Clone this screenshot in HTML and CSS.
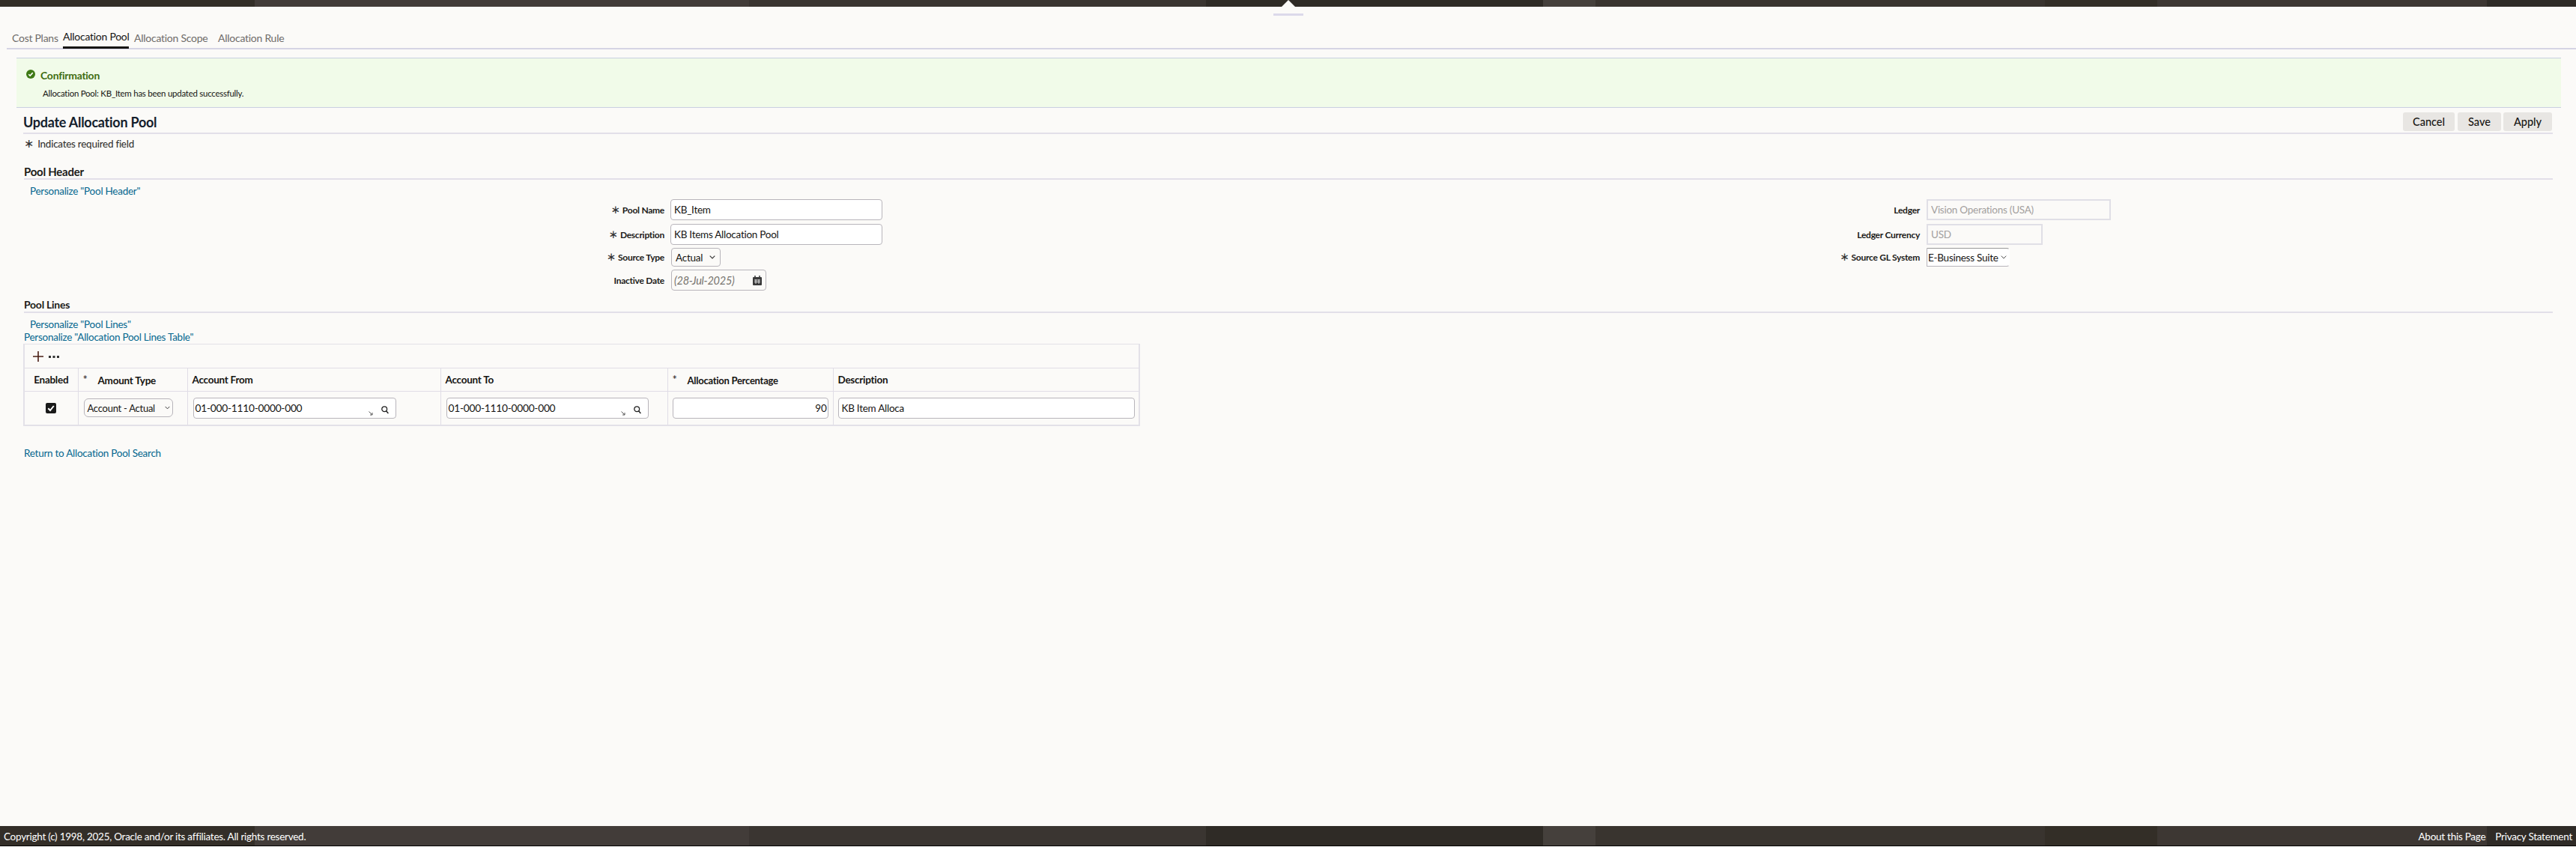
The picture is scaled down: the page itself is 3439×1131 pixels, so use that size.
FILE: index.html
```html
<!DOCTYPE html>
<html lang="en">
<head>
<meta charset="utf-8">
<title>Update Allocation Pool</title>
<link rel="stylesheet" href="styles.css">
</head>
<body>
<header class="topbar">
  <span class="notch"></span>
</header>
<div class="grip-row"><span class="grip"></span></div>
<nav class="tabs">
  <a class="tab tab-cost">Cost Plans</a>
  <a class="tab tab-active">Allocation Pool</a>
  <a class="tab tab-scope">Allocation Scope</a>
  <a class="tab tab-rule">Allocation Rule</a>
</nav>
<main class="main">
  <section class="confirm">
    <div class="confirm-head">
      <svg class="confirm-icon" width="12" height="12" viewBox="0 0 14 14"><circle cx="7" cy="7" r="7" fill="#3f7a16"/><path d="M3.800 7.200 6 9.400l4.200-4.600" fill="none" stroke="#fff" stroke-width="1.800"/></svg>
      <span class="confirm-title">Confirmation</span>
    </div>
    <p class="confirm-msg">Allocation Pool: KB_Item has been updated successfully.</p>
  </section>

  <div class="page-head">
    <h1 class="page-title">Update Allocation Pool</h1>
    <div class="actions">
      <button class="btn btn-cancel">Cancel</button>
      <button class="btn btn-save">Save</button>
      <button class="btn btn-apply">Apply</button>
    </div>
  </div>
  <p class="required-note"><span class="star star-note">∗</span>Indicates required field</p>

  <h2 class="section-title section-pool">Pool Header</h2>
  <a class="link link-indent link-pool">Personalize "Pool Header"</a>

  <div class="form">
    <div class="form-col col-left">
      <div class="form-row row-first"><label class="label"><span class="star">∗</span>Pool Name</label><input class="input w-283" value="KB_Item"></div>
      <div class="form-row"><label class="label"><span class="star">∗</span>Description</label><input class="input w-283" value="KB Items Allocation Pool"></div>
      <div class="form-row"><label class="label"><span class="star">∗</span>Source Type</label>
        <div class="select w-66"><span>Actual</span><svg class="chev" width="8" height="5" viewBox="0 0 8 5"><path d="M.7.7 4 4 7.300.7" fill="none" stroke="#333" stroke-width="1.100"/></svg></div></div>
      <div class="form-row"><label class="label">Inactive Date</label>
        <div class="date w-127"><span class="date-text">(28-Jul-2025)</span>
          <svg width="12" height="13" viewBox="0 0 12 13"><path d="M1 2h10a1 1 0 0 1 1 1v9a1 1 0 0 1-1 1H1a1 1 0 0 1-1-1V3a1 1 0 0 1 1-1z" fill="#3a3a3a"/><path d="M3 0v3M9 0v3" stroke="#3a3a3a" stroke-width="1.500"/><path d="M2 6h8M2 8.500h8M4 5v6M8 5v6" stroke="#fff" stroke-width=".8"/></svg></div></div>
    </div>
    <div class="form-col col-right">
      <div class="form-row row-first"><label class="label">Ledger</label><input class="input input-off w-246" value="Vision Operations (USA)" disabled></div>
      <div class="form-row"><label class="label">Ledger Currency</label><input class="input input-off w-155" value="USD" disabled></div>
      <div class="form-row"><label class="label"><span class="star">∗</span>Source GL System</label>
        <div class="select select-square w-111"><span>E-Business Suite</span><svg class="chev" width="8" height="5" viewBox="0 0 8 5"><path d="M.7.7 4 4 7.300.7" fill="none" stroke="#555" stroke-width="1"/></svg></div></div>
    </div>
  </div>

  <h2 class="section-title section-lines">Pool Lines</h2>
  <a class="link link-indent link-lines">Personalize "Pool Lines"</a>
  <a class="link link-table">Personalize "Allocation Pool Lines Table"</a>

  <div class="table-wrap">
    <div class="toolbar">
      <svg width="14" height="14" viewBox="0 0 14 14"><path d="M7 0v14M0 7h14" stroke="#4a1f14" stroke-width="1.600"/></svg>
      <svg class="dots" width="14" height="3" viewBox="0 0 14 3"><path d="M0 0h3v3H0zM5.500 0h3v3h-3zM11 0h3v3h-3z" fill="#333"/></svg>
    </div>
    <table class="lines">
      <colgroup><col class="c1"><col class="c2"><col class="c3"><col class="c4"><col class="c5"><col class="c6"></colgroup>
      <thead><tr>
        <th class="center">Enabled</th>
        <th><span class="th-star">*</span>Amount Type</th>
        <th>Account From</th>
        <th>Account To</th>
        <th class="th-narrow"><span class="th-star">*</span>Allocation Percentage</th>
        <th>Description</th>
      </tr></thead>
      <tbody><tr>
        <td class="center"><svg class="check" width="14" height="14" viewBox="0 0 14 14"><rect width="14" height="14" rx="2" fill="#1a1a1a"/><path d="M3.300 7.300 6 10l4.800-6" fill="none" stroke="#fff" stroke-width="2"/></svg></td>
        <td><div class="select cell-select"><span>Account - Actual</span><svg class="chev" width="7" height="5" viewBox="0 0 8 5"><path d="M.7.7 4 4 7.300.7" fill="none" stroke="#333" stroke-width="1.100"/></svg></div></td>
        <td><div class="lov w-271"><span class="lov-text">01-000-1110-0000-000</span>
          <svg class="lov-arrow" width="6" height="6" viewBox="0 0 6 6"><path d="M.5.500 5 5M5 2v3H2" fill="none" stroke="#555" stroke-width="1"/></svg>
          <svg class="lov-search" width="10" height="11" viewBox="0 0 10 11"><circle cx="4.200" cy="4.200" r="3.400" fill="none" stroke="#222" stroke-width="1.300"/><path d="M6.600 6.800 9.400 10" stroke="#222" stroke-width="1.400"/></svg></div></td>
        <td><div class="lov w-270"><span class="lov-text">01-000-1110-0000-000</span>
          <svg class="lov-arrow" width="6" height="6" viewBox="0 0 6 6"><path d="M.5.500 5 5M5 2v3H2" fill="none" stroke="#555" stroke-width="1"/></svg>
          <svg class="lov-search" width="10" height="11" viewBox="0 0 10 11"><circle cx="4.200" cy="4.200" r="3.400" fill="none" stroke="#222" stroke-width="1.300"/><path d="M6.600 6.800 9.400 10" stroke="#222" stroke-width="1.400"/></svg></div></td>
        <td><input class="input input-num w-208" value="90"></td>
        <td><input class="input w-396" value="KB Item Alloca"></td>
      </tr></tbody>
    </table>
  </div>

  <a class="link link-return">Return to Allocation Pool Search</a>
</main>
<footer class="footer">
  <span>Copyright (c) 1998, 2025, Oracle and/or its affiliates. All rights reserved.</span>
  <span class="footer-links"><a>About this Page</a><a>Privacy Statement</a></span>
</footer>
</body>
</html>
```
FILE: styles.css
```css
* { box-sizing: border-box; }
html, body { height: 100%; }
body {
  margin: 0;
  height: 1131px;
  overflow: hidden;
  display: flex;
  flex-direction: column;
  background: #fbfaf8;
  color: #161513;
  font-family: Lato, "Liberation Sans", sans-serif;
  font-size: 13px;
  letter-spacing: -0.02em;
}
.topbar, .footer {
  background-color: #39342f;
  background-image: linear-gradient(90deg,
    #332e28 0, #332e28 340px, #423c39 340px, #423c39 1000px,
    #3a3531 1000px, #3a3531 1610px, #2f2b26 1610px, #2f2b26 2060px,
    #45403c 2060px, #45403c 2130px, #39342f 2130px, #39342f 2730px,
    #332e27 2730px, #332e27 2880px, #3d3733 2880px, #3d3733 3320px, #2f2b27 3320px);
}
.topbar { height: 9px; position: relative; flex: none; }
.notch {
  position: absolute;
  left: 1711px;
  top: 0;
  width: 0; height: 0;
  border-left: 9px solid transparent;
  border-right: 9px solid transparent;
  border-bottom: 9px solid #fbfaf8;
}
.grip-row { height: 12px; flex: none; padding: 9px 0 0 1700px; }
.grip { display: block; width: 40px; height: 3px; background: #dcd9ea; }

.tabs {
  flex: none;
  height: 45px;
  margin-left: 9px;
  border-bottom: 2px solid #d5d4e4;
  display: flex;
  align-items: flex-end;
  padding-left: 7px;
  font-size: 14px;
  color: #6f6c6a;
}
.tab { display: block; height: 30px; line-height: 34px; white-space: nowrap; }
.tab-cost { width: 68px; }
.tab-active {
  width: 88px; color: #161513; margin-right: 7px;
  border-bottom: 3px solid #161513; margin-bottom: -1px; line-height: 28px;
}
.tab-scope { width: 112px; }

.main { flex: 1; min-height: 0; padding: 11px 31px 0 22px; }
.confirm {
  height: 67px;
  margin-right: -11px;
  background: #f1fbe9;
  border-top: 1px solid #c9cfe0;
  border-bottom: 1px solid #c9cfe0;
  padding: 14px 0 0 13px;
}
.confirm-head { display: flex; align-items: center; gap: 7px; height: 16px; }
.confirm-icon { flex: none; margin-top: -2px; }
.confirm-title { color: #3f6d12; font-weight: 700; font-size: 14px; }
.confirm-msg { margin: 8px 0 0 22px; font-size: 11.500px; line-height: 18px; }

.page-head {
  margin-left: 9px;
  height: 35px;
  border-bottom: 2px solid #e2dfe9;
  display: flex;
  justify-content: space-between;
  align-items: flex-start;
  padding-top: 6px;
}
.page-title { margin: 0; font-size: 18px; line-height: 26px; font-weight: 700; color: #14202c; }
.actions { display: flex; gap: 3px; margin-right: 1px; }
.btn {
  height: 25px;
  padding: 0;
  border: 0;
  border-radius: 3px;
  background: #e8e6e3;
  color: #161513;
  font: 500 14.500px Lato, sans-serif;
}
.btn-cancel { width: 69px; margin-right: 1px; }
.btn-save { width: 58px; }
.btn-apply { width: 65px; }
.required-note { margin: 3px 0 0 10px; height: 20px; line-height: 20px; font-size: 13.500px; color: #2b2a28; }
.star { font-family: "DejaVu Sans", sans-serif; color: #333; margin-right: 3px; font-weight: 400; font-size: 15px; line-height: 1; }
.star-note { margin-right: 5px; font-size: 16px; }

.section-title {
  margin: 0 0 0 10px;
  font-size: 15px;
  font-weight: 700;
  line-height: 18px;
  color: #1b1a18;
  border-bottom: 2px solid #e2dfe9;
}
.section-pool { margin-top: 18px; }
.section-lines { font-size: 14px; }

.link { display: block; color: #04678f; font-size: 13.500px; line-height: 18px; white-space: nowrap; }
.link-indent { margin-left: 18px; }
.link-pool { margin-top: 6px; }
.link-lines { margin-top: 6px; }
.link-table { margin-left: 10px; line-height: 17px; }
.link-return { margin: 27px 0 0 10px; }

.form { display: flex; margin: 2px 0 0 -22px; height: 132px; }
.form-col { display: flex; flex-direction: column; gap: 4px; }
.col-left { width: 1680px; }
.col-right { flex: 1; }
.form-row { display: flex; align-items: center; }
.row-first { margin-bottom: 1px; }
.label { text-align: right; font-weight: 700; font-size: 12px; color: #1b1a18; white-space: nowrap; }
.col-left .label { width: 887px; margin-right: 8px; }
.col-right .label { width: 883px; margin-right: 9px; }

.input {
  height: 28px;
  padding: 0 4px;
  border: 1px solid #b8b5bb;
  border-radius: 4px;
  background: #fff;
  color: #161513;
  font: 13.500px Lato, sans-serif;
  letter-spacing: inherit;
  display: block;
}
.input-off {
  background: #fbfaf8;
  border: 2px solid #e0dfe6;
  border-radius: 0;
  color: #a3a09e;
  padding: 0 4px;
}
.input-num { text-align: right; padding-right: 1px; }
.w-283 { width: 283px; }
.w-246 { width: 246px; }
.w-155 { width: 155px; }
.w-208 { width: 208px; }
.w-396 { width: 396px; }
.select {
  height: 25px;
  display: flex;
  align-items: center;
  justify-content: space-between;
  border: 1px solid #b8b5bb;
  border-radius: 4px;
  padding: 0 6px 0 5px;
  background: #fbfaf8;
  font-size: 13.500px;
  white-space: nowrap;
}
.w-66 { width: 66px; margin-left: 1px; }
.w-111 { width: 111px; }
.select-square { border-radius: 0 4px 4px 0; padding: 0 3px 0 1px; background: #fff; border-top: 1px solid #999; border-right-color: #fff; }
.date {
  height: 28px;
  margin-left: 1px;
  display: flex;
  align-items: center;
  justify-content: space-between;
  border: 1px solid #b8b5bb;
  border-radius: 4px;
  padding: 0 5px 0 3px;
  font-size: 14.500px;
}
.w-127 { width: 127px; }
.date-text { color: #77746f; font-style: italic; }

.table-wrap { margin: 0 0 0 9px; width: 1491px; border: 2px solid #e3e1e8; border-top-width: 1px; }
.toolbar { height: 31px; display: flex; align-items: center; gap: 7px; padding-left: 11px; }
.dots { margin-top: 2px; }
.lines { width: 100%; table-layout: fixed; border-collapse: collapse; }
.c1 { width: 71px; }
.c2 { width: 146px; }
.c3 { width: 338px; }
.c4 { width: 303px; }
.c5 { width: 221px; }
.lines th, .lines td { border-top: 1px solid #e0dde6; border-left: 1px solid #e0dde6; padding: 0 0 0 6px; }
.lines th:first-child, .lines td:first-child { border-left: 0; padding: 0; }
.lines th { height: 31px; text-align: left; font-size: 13.500px; font-weight: 700; white-space: nowrap; color: #161513; }
.lines th.th-narrow { font-size: 13px; }
.lines td { height: 44px; }
.lines th.center, .lines td.center { text-align: center; }
.check { display: block; margin: 0 auto; }
.th-star { display: inline-block; width: 20px; font-size: 15px; font-weight: 400; line-height: 1; vertical-align: 1px; }
.cell-select { width: 119px; height: 25px; margin-left: 1px; padding: 0 3px 0 4px; font-size: 13px; border-radius: 6px; }
.lov {
  height: 28px;
  margin-left: 1px;
  position: relative;
  border: 1px solid #b8b5bb;
  border-radius: 4px;
  background: #fff;
  display: flex;
  align-items: center;
  padding-left: 2px;
  font-size: 13.750px;
}
.w-271 { width: 271px; }
.w-270 { width: 270px; }
.lov-arrow { position: absolute; right: 30px; bottom: 3px; }
.lov-search { position: absolute; right: 9px; bottom: 5px; }

.footer {
  flex: none;
  height: 27px;
  margin-bottom: 1px;
  border-bottom: 1px solid #000;
  display: flex;
  justify-content: space-between;
  align-items: center;
  padding: 1px 5px 0;
  color: #fff;
  font-size: 13.500px;
}
.footer-links { display: flex; gap: 13px; }
```
